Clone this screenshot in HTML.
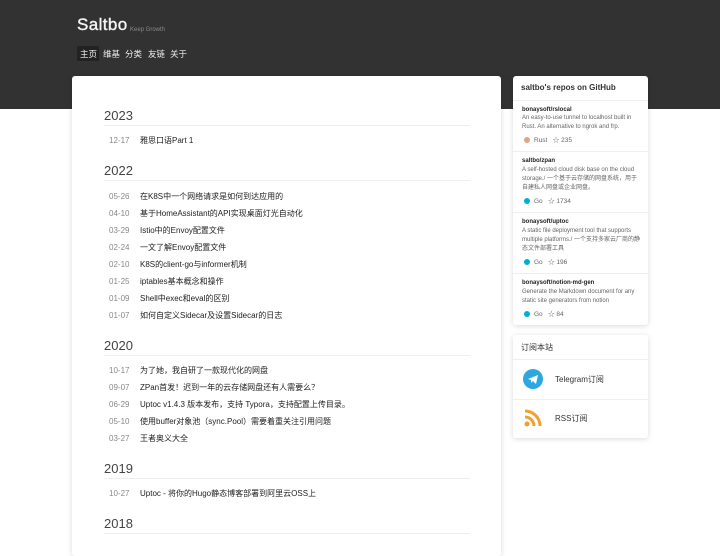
<!DOCTYPE html><html><head><meta charset="utf-8"><style>
*{margin:0;padding:0;box-sizing:border-box}
body{width:720px;height:540px;overflow:hidden;background:#fff;font-family:"Liberation Sans","Noto Sans CJK SC",sans-serif;position:relative;color:#333}
.hd{position:absolute;left:0;top:0;width:720px;height:109px;background:#323232}
.a{position:absolute;white-space:nowrap}
.card{position:absolute;background:#fff;box-shadow:0 1px 6px rgba(0,0,0,.15);border-radius:3px}
.yr{position:absolute;left:104px;font-size:13px;color:#444;line-height:16px}
.ln{position:absolute;left:104px;width:366px;height:1px;background:#eee}
.d{position:absolute;left:109px;font-size:8px;color:#888;line-height:10px}
.t{position:absolute;left:140px;font-size:8px;color:#222;line-height:10px}
.rn{position:absolute;left:522px;font-size:6px;font-weight:bold;color:#222;line-height:8px}
.rd{position:absolute;left:522px;font-size:6px;color:#666;line-height:9px;width:120px}
.rm{position:absolute;left:524px;font-size:6.5px;color:#666;line-height:8px}
.dot{display:inline-block;width:6px;height:6px;border-radius:50%;vertical-align:-1px;margin-right:4px}
.sep{position:absolute;left:513px;width:135px;height:1px;background:#eee}
.nv{position:absolute;top:48px;font-size:8.5px;color:#eee}
</style></head><body>
<div class="hd"></div>
<div class="a" style="left:77px;top:15px;font-size:17px;color:#f4f4f4;letter-spacing:.4px;-webkit-text-stroke:.4px #f4f4f4">Saltbo</div>
<div class="a" style="left:130px;top:27px;font-size:6px;color:#888">Keep Growth</div>
<div class="a" style="left:77px;top:46px;width:22px;height:15px;background:#222"></div>
<div class="nv" style="left:80px">主页</div>
<div class="nv" style="left:103px">维基</div>
<div class="nv" style="left:125px">分类</div>
<div class="nv" style="left:148px">友链</div>
<div class="nv" style="left:170px">关于</div>
<div class="card" style="left:72px;top:76px;width:429px;height:480px"></div>
<div class="yr" style="top:108px">2023</div><div class="ln" style="top:125px"></div>
<div class="d" style="top:136px">12-17</div><div class="t" style="top:136px">雅思口语Part 1</div>
<div class="yr" style="top:163px">2022</div><div class="ln" style="top:180px"></div>
<div class="d" style="top:192px">05-26</div><div class="t" style="top:192px">在K8S中一个网络请求是如何到达应用的</div>
<div class="d" style="top:209px">04-10</div><div class="t" style="top:209px">基于HomeAssistant的API实现桌面灯光自动化</div>
<div class="d" style="top:226px">03-29</div><div class="t" style="top:226px">Istio中的Envoy配置文件</div>
<div class="d" style="top:243px">02-24</div><div class="t" style="top:243px">一文了解Envoy配置文件</div>
<div class="d" style="top:260px">02-10</div><div class="t" style="top:260px">K8S的client-go与informer机制</div>
<div class="d" style="top:277px">01-25</div><div class="t" style="top:277px">iptables基本概念和操作</div>
<div class="d" style="top:294px">01-09</div><div class="t" style="top:294px">Shell中exec和eval的区别</div>
<div class="d" style="top:311px">01-07</div><div class="t" style="top:311px">如何自定义Sidecar及设置Sidecar的日志</div>
<div class="yr" style="top:338px">2020</div><div class="ln" style="top:355px"></div>
<div class="d" style="top:366px">10-17</div><div class="t" style="top:366px">为了她，我自研了一款现代化的网盘</div>
<div class="d" style="top:383px">09-07</div><div class="t" style="top:383px">ZPan首发！迟到一年的云存储网盘还有人需要么？</div>
<div class="d" style="top:400px">06-29</div><div class="t" style="top:400px">Uptoc v1.4.3 版本发布，支持 Typora，支持配置上传目录。</div>
<div class="d" style="top:417px">05-10</div><div class="t" style="top:417px">使用buffer对象池（sync.Pool）需要着重关注引用问题</div>
<div class="d" style="top:434px">03-27</div><div class="t" style="top:434px">王者奥义大全</div>
<div class="yr" style="top:461px">2019</div><div class="ln" style="top:478px"></div>
<div class="d" style="top:489px">10-27</div><div class="t" style="top:489px">Uptoc - 将你的Hugo静态博客部署到阿里云OSS上</div>
<div class="yr" style="top:516px">2018</div><div class="ln" style="top:533px"></div>

<div class="card" style="left:513px;top:76px;width:135px;height:249px"></div>
<div class="a" style="left:521px;top:83px;font-size:8px;font-weight:bold;color:#333">saltbo's repos on GitHub</div>
<div class="sep" style="top:100px"></div>
<div class="rn" style="top:106px">bonaysoft/rslocal</div>
<div class="rd" style="top:114px">An easy-to-use tunnel to localhost built in Rust. An alternative to ngrok and frp.</div>
<div class="rm" style="top:137px"><span class="dot" style="background:#dea584"></span>Rust &nbsp;&nbsp;☆ 235</div>
<div class="sep" style="top:151px"></div>
<div class="rn" style="top:157px">saltbo/zpan</div>
<div class="rd" style="top:166px">A self-hosted cloud disk base on the cloud storage./ 一个基于云存储的网盘系统，用于自建私人网盘或企业网盘。</div>
<div class="rm" style="top:198px"><span class="dot" style="background:#00add8"></span>Go &nbsp;&nbsp;☆ 1734</div>
<div class="sep" style="top:212px"></div>
<div class="rn" style="top:218px">bonaysoft/uptoc</div>
<div class="rd" style="top:227px">A static file deployment tool that supports multiple platforms./ 一个支持多家云厂商的静态文件部署工具</div>
<div class="rm" style="top:259px"><span class="dot" style="background:#00add8"></span>Go &nbsp;&nbsp;☆ 196</div>
<div class="sep" style="top:273px"></div>
<div class="rn" style="top:279px">bonaysoft/notion-md-gen</div>
<div class="rd" style="top:288px">Generate the Markdown document for any static site generators from notion</div>
<div class="rm" style="top:311px"><span class="dot" style="background:#00add8"></span>Go &nbsp;&nbsp;☆ 84</div>

<div class="card" style="left:513px;top:335px;width:135px;height:103px"></div>
<div class="a" style="left:521px;top:342px;font-size:8px;color:#333">订阅本站</div>
<div class="sep" style="top:359px"></div>
<svg class="a" style="left:523px;top:369px" width="20" height="20" viewBox="0 0 20 20"><circle cx="10" cy="10" r="10" fill="#2ea6e0"/><path d="M5 10 L15 6 L13 15 L10 12 L8 14 L8 11 Z" fill="#fff"/></svg>
<div class="a" style="left:555px;top:374px;font-size:8px;color:#333">Telegram订阅</div>
<div class="sep" style="top:399px"></div>
<svg class="a" style="left:523px;top:408px" width="20" height="20" viewBox="0 0 20 20"><circle cx="4" cy="16" r="2.5" fill="#f0a030"/><path d="M2 9a9 9 0 0 1 9 9" stroke="#f0a030" stroke-width="3" fill="none"/><path d="M2 3a15 15 0 0 1 15 15" stroke="#f0a030" stroke-width="3" fill="none"/></svg>
<div class="a" style="left:555px;top:413px;font-size:8px;color:#333">RSS订阅</div>
</body></html>
